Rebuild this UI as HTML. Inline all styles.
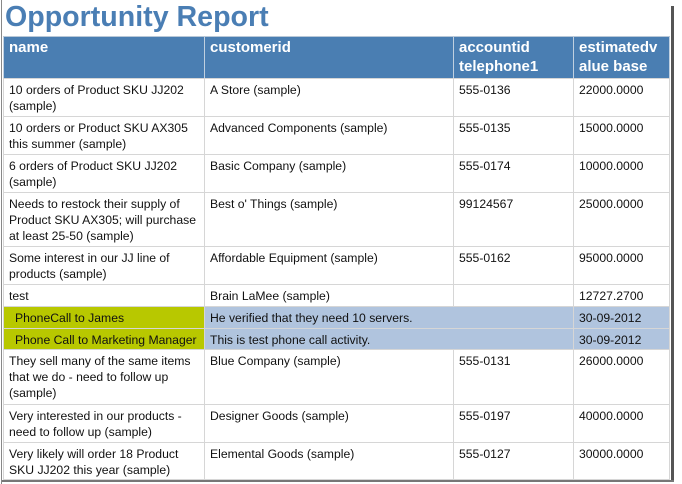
<!DOCTYPE html>
<html><head><style>
*{margin:0;padding:0;box-sizing:border-box}
body{width:682px;height:484px;background:#fff;position:relative;overflow:hidden;font-family:"Liberation Sans",Tahoma,sans-serif;font-size:12.2px;color:#111}
h1{position:absolute;left:5px;top:0px;font-size:28.6px;font-weight:bold;color:#4a7eb4;line-height:34px}
.edge{position:absolute;left:1px;top:0;width:1px;height:484px;background:#888}
.r{position:absolute;left:3px;width:667px;border-top:1px solid #d6d6d6}
.c{position:absolute;top:0;bottom:0;padding:3px 4px 0 5px;line-height:16px;border-left:1px solid #d6d6d6}
.c1{left:0;width:201px}.c2{left:201px;width:249px}.c3{left:450px;width:120px}.c4{left:570px;width:97px;border-right:1px solid #d6d6d6}
.h{background:#4a7eb2;color:#fff;font-weight:bold;font-size:15px;border-color:#b8c8d8}
.h .c{line-height:19px;padding-top:1px;border-color:#c0d0e0}
.b{background:#b0c4de}
.y{background:#b8c800;padding-left:11px}
</style></head><body>
<div class="edge"></div>
<h1>Opportunity Report</h1>
<div class="r h" style="top:36px;height:42px"><div class="c c1">name</div><div class="c c2">customerid</div><div class="c c3">accountid telephone1</div><div class="c c4">estimatedv alue base</div></div>
<div class="r" style="top:78px;height:38px"><div class="c c1">10 orders of Product SKU JJ202 (sample)</div><div class="c c2">A Store (sample)</div><div class="c c3">555-0136</div><div class="c c4">22000.0000</div></div>
<div class="r" style="top:116px;height:38px"><div class="c c1">10 orders or Product SKU AX305 this summer (sample)</div><div class="c c2">Advanced Components (sample)</div><div class="c c3">555-0135</div><div class="c c4">15000.0000</div></div>
<div class="r" style="top:154px;height:38px"><div class="c c1">6 orders of Product SKU JJ202 (sample)</div><div class="c c2">Basic Company (sample)</div><div class="c c3">555-0174</div><div class="c c4">10000.0000</div></div>
<div class="r" style="top:192px;height:54px"><div class="c c1">Needs to restock their supply of Product SKU AX305; will purchase at least 25-50 (sample)</div><div class="c c2">Best o' Things (sample)</div><div class="c c3">99124567</div><div class="c c4">25000.0000</div></div>
<div class="r" style="top:246px;height:38px"><div class="c c1">Some interest in our JJ line of products (sample)</div><div class="c c2">Affordable Equipment (sample)</div><div class="c c3">555-0162</div><div class="c c4">95000.0000</div></div>
<div class="r" style="top:284px;height:22px"><div class="c c1">test</div><div class="c c2">Brain LaMee (sample)</div><div class="c c3"></div><div class="c c4">12727.2700</div></div>
<div class="r b" style="top:306px;height:22px"><div class="c c1 y">PhoneCall to James</div><div class="c c2" style="width:369px">He verified that they need 10 servers.</div><div class="c c4">30-09-2012</div></div>
<div class="r b" style="top:328px;height:21px"><div class="c c1 y">Phone Call to Marketing Manager</div><div class="c c2" style="width:369px">This is test phone call activity.</div><div class="c c4">30-09-2012</div></div>
<div class="r" style="top:349px;height:55px"><div class="c c1">They sell many of the same items that we do - need to follow up (sample)</div><div class="c c2">Blue Company (sample)</div><div class="c c3">555-0131</div><div class="c c4">26000.0000</div></div>
<div class="r" style="top:404px;height:38px"><div class="c c1">Very interested in our products - need to follow up (sample)</div><div class="c c2">Designer Goods (sample)</div><div class="c c3">555-0197</div><div class="c c4">40000.0000</div></div>
<div class="r" style="top:442px;height:38px;border-bottom:1px solid #d6d6d6"><div class="c c1">Very likely will order 18 Product SKU JJ202 this year (sample)</div><div class="c c2">Elemental Goods (sample)</div><div class="c c3">555-0127</div><div class="c c4">30000.0000</div></div>
<div style="position:absolute;left:671px;top:6px;width:3px;height:476px;background:#555"></div>
<div style="position:absolute;left:2px;top:480px;width:672px;height:2px;background:#777"></div>
</body></html>
